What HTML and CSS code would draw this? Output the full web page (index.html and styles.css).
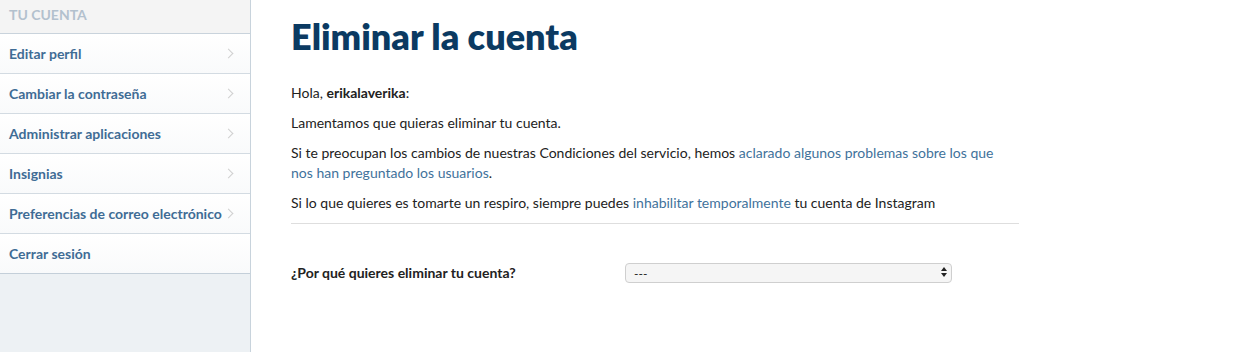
FILE: index.html
```html
<!DOCTYPE html>
<html lang="es">
<head>
    <meta charset="UTF-8">
    <title>Eliminar la cuenta</title>
    <link rel="stylesheet" href="styles.css">
</head>
<body>
    <div class="page">
        <div class="sidebar">
            <div class="sidebar-title">Tu cuenta</div>
            <a class="nav-item" href="#">Editar perfil<span class="chevron"></span></a>
            <a class="nav-item" href="#">Cambiar la contraseña<span class="chevron"></span></a>
            <a class="nav-item" href="#">Administrar aplicaciones<span class="chevron"></span></a>
            <a class="nav-item" href="#">Insignias<span class="chevron"></span></a>
            <a class="nav-item" href="#">Preferencias de correo electrónico<span class="chevron"></span></a>
            <a class="nav-item" href="#">Cerrar sesión</a>
        </div>
        <div class="main">
            <h1>Eliminar la cuenta</h1>
            <p>Hola, <strong>erikalaverika</strong>:</p>
            <p>Lamentamos que quieras eliminar tu cuenta.</p>
            <p>Si te preocupan los cambios de nuestras Condiciones del servicio, hemos <a href="#">aclarado algunos problemas sobre los que nos han preguntado los usuarios</a>.</p>
            <p>Si lo que quieres es tomarte un respiro, siempre puedes <a href="#">inhabilitar temporalmente</a> tu cuenta de Instagram</p>
            <hr>
            <div class="form-row">
                <label for="reason">¿Por qué quieres eliminar tu cuenta?</label>
                <div class="select">
                    <select id="reason">
                        <option>---</option>
                    </select>
                    <span class="arrows"></span>
                </div>
            </div>
        </div>
    </div>
</body>
</html>
```

FILE: styles.css
```css
body {
    margin: 0;
    font-family: Lato, "Open Sans", sans-serif;
    color: #222;
    background-color: #fff;
}
.page {
    display: flex;
    height: 352px;
}
.sidebar {
    width: 250px;
    flex-shrink: 0;
    background-color: #edf1f4;
    border-right: 1px solid #c8d3dc;
}
.sidebar-title {
    height: 33px;
    line-height: 30px;
    padding-left: 9px;
    background-color: #f4f4f4;
    border-bottom: 1px solid #c9d3dc;
    color: #b3c1ce;
    font-size: 14px;
    font-weight: bold;
    text-transform: uppercase;
}
.nav-item {
    position: relative;
    display: block;
    height: 39px;
    line-height: 40px;
    padding-left: 9px;
    background: linear-gradient(#ffffff, #f9fafb);
    border-bottom: 1px solid #d3dbe2;
    color: #3f6c95;
    font-size: 14px;
    font-weight: bold;
    text-decoration: none;
}
.nav-item:last-child {
    border-bottom-color: #c4cfd9;
}
.chevron {
    position: absolute;
    right: 18px;
    top: 16px;
    width: 6px;
    height: 6px;
    border-top: 1px solid #d0d0d0;
    border-right: 1px solid #d0d0d0;
    transform: rotate(45deg);
}
.main {
    padding: 0 40px;
    width: 728px;
}
h1 {
    margin: 15px 0 26px;
    color: #0b3a62;
    font-size: 36px;
    line-height: 42px;
    font-weight: 800;
}
p {
    max-width: 712px;
    margin: 0 0 10px;
    font-size: 14px;
    line-height: 20px;
}
p a {
    color: #3f729b;
    text-decoration: none;
}
hr {
    border: none;
    border-top: 1px solid #dedede;
    margin: 0;
}
.form-row {
    display: flex;
    align-items: center;
    margin-top: 39px;
}
.form-row label {
    width: 334px;
    font-size: 14px;
    line-height: 20px;
    font-weight: bold;
}
.select {
    position: relative;
    width: 327px;
    height: 20px;
}
.select select {
    display: block;
    width: 100%;
    height: 20px;
    padding: 0 8px;
    border: 1px solid #cfcfcf;
    border-radius: 4px;
    background-color: #f5f5f5;
    font-family: inherit;
    font-size: 12px;
    color: #222;
    appearance: none;
}
.arrows {
    position: absolute;
    right: 5px;
    top: 4px;
    width: 0;
    height: 0;
    border-left: 3px solid transparent;
    border-right: 3px solid transparent;
    border-bottom: 4px solid #222;
}
.arrows::after {
    content: "";
    position: absolute;
    left: -3px;
    top: 6px;
    border-left: 3px solid transparent;
    border-right: 3px solid transparent;
    border-top: 4px solid #222;
}
```
